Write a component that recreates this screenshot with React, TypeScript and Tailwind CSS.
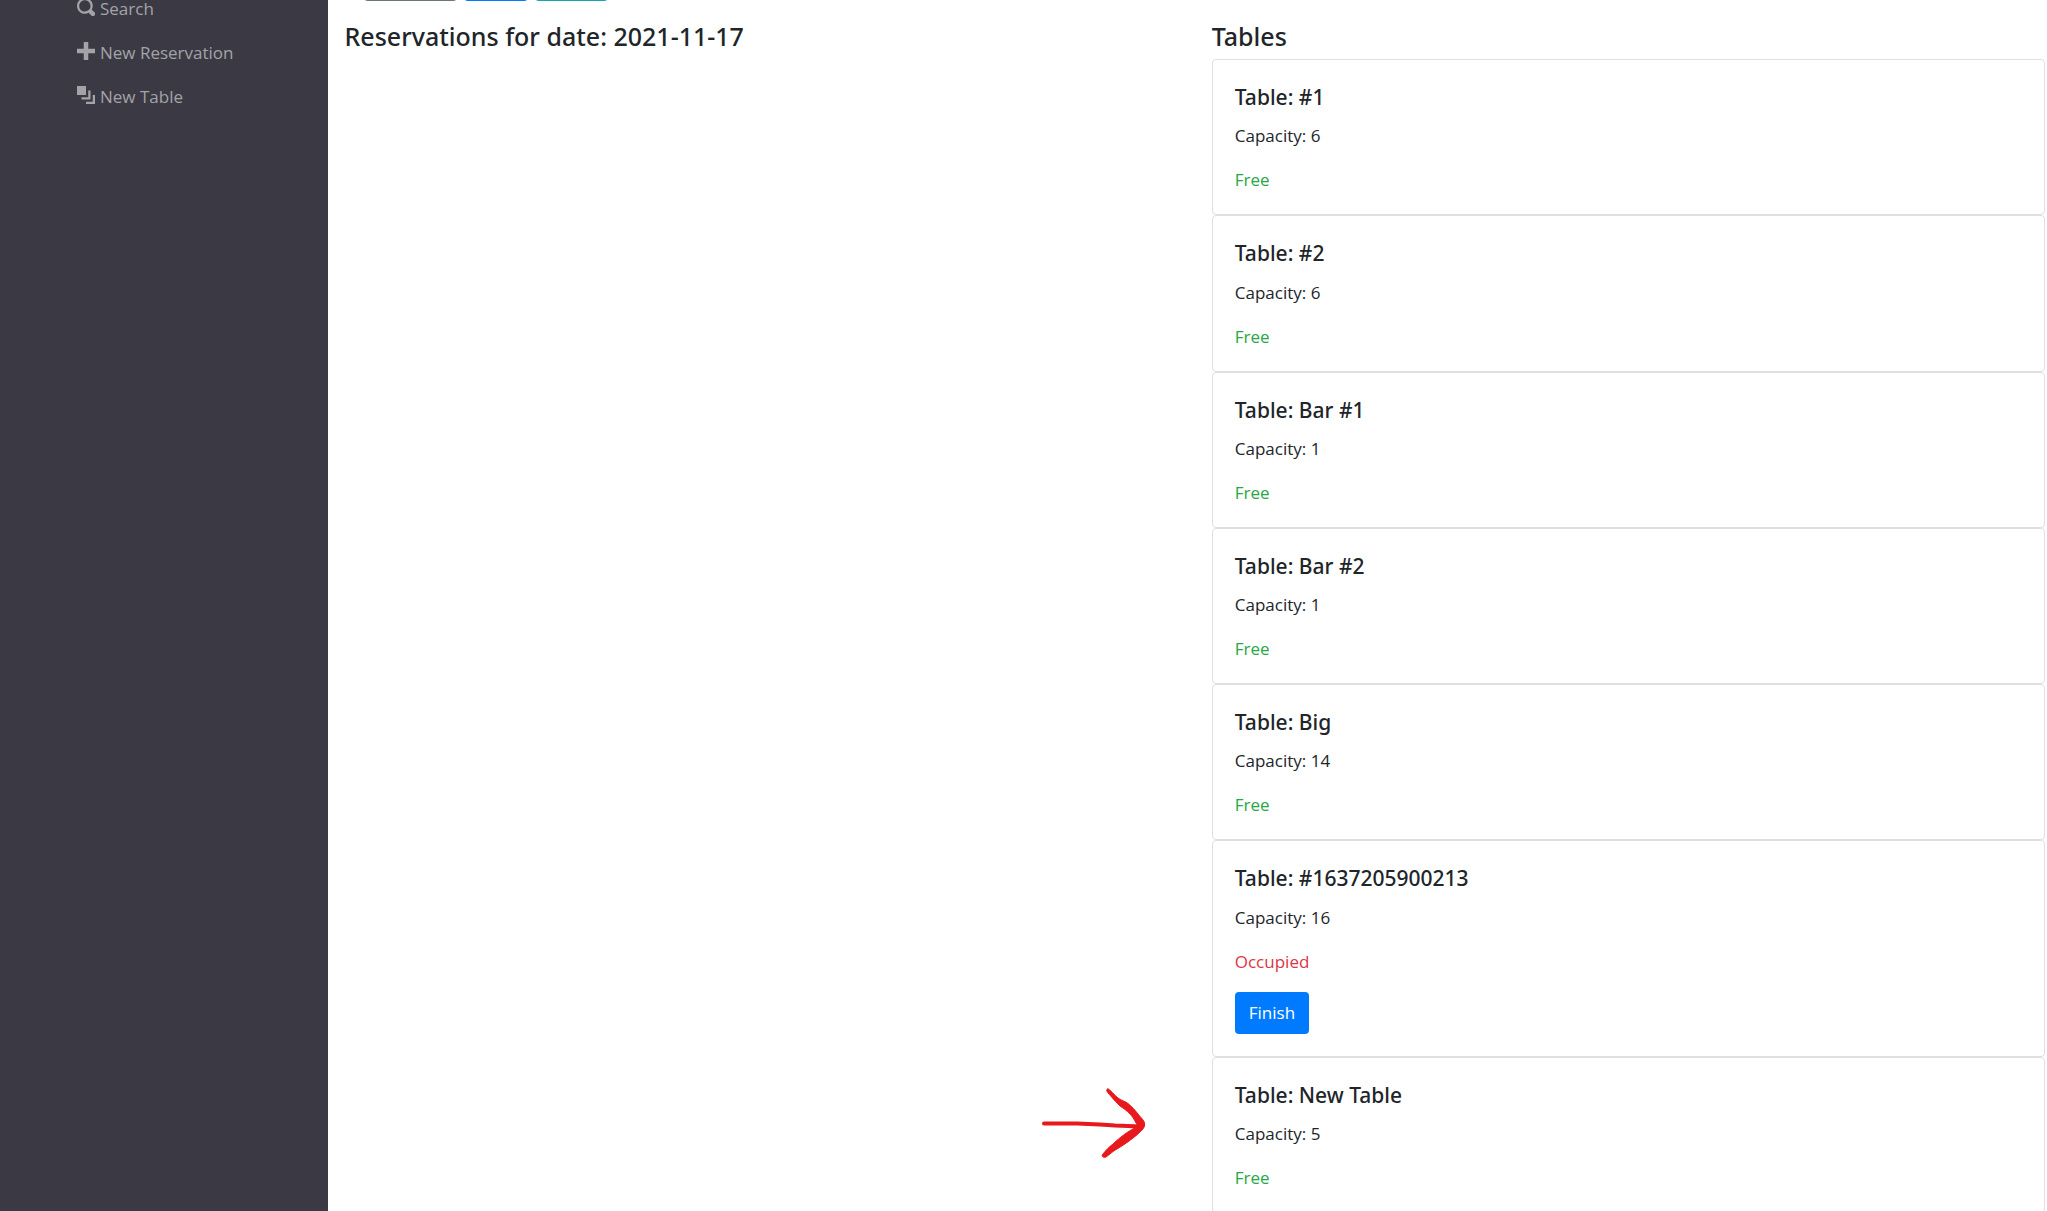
import React from "react";

type Table = { name: string; capacity: number; occupied?: boolean; marked?: boolean };

const tables: Table[] = [
  { name: "#1", capacity: 6 },
  { name: "#2", capacity: 6 },
  { name: "Bar #1", capacity: 1 },
  { name: "Bar #2", capacity: 1 },
  { name: "Big", capacity: 14 },
  { name: "#1637205900213", capacity: 16, occupied: true },
  { name: "New Table", capacity: 5, marked: true },
];

const links = [
  {
    label: "Search",
    path: "M3.5 0c-1.93 0-3.5 1.57-3.5 3.5s1.57 3.5 3.5 3.5c.59 0 1.17-.14 1.66-.41a1 1 0 0 0 .13.13l1 1a1.02 1.02 0 1 0 1.44-1.44l-1-1a1 1 0 0 0-.16-.13c.27-.49.44-1.06.44-1.66 0-1.93-1.55-3.5-3.5-3.5zm0 1c1.39 0 2.5 1.11 2.5 2.5 0 .66-.24 1.27-.66 1.72-.01.01-.02.02-.03.03a1 1 0 0 0-.13.13c-.44.4-1.04.63-1.69.63-1.39 0-2.5-1.11-2.5-2.5s1.11-2.5 2.5-2.5z",
  },
  { label: "New Reservation", path: "M3 0v3h-3v2h3v3h2v-3h3v-2h-3v-3h-2z" },
  {
    label: "New Table",
    path: "M0 0v4h4v-4h-4zm5 2v3h-3v1h4v-4h-1zm2 2v3h-3v1h4v-4h-1z",
  },
];

function Sidebar() {
  return (
    <nav className="w-[16%] shrink-0 bg-[#3b3a44]">
      <ul className="-mt-[13px] pl-[77px]">
        {links.map((link) => (
          <li key={link.label}>
            <a href="#" className="flex h-11 items-center gap-[5px] whitespace-nowrap text-[#a3a3a8]">
              <svg viewBox="0 0 8 8" className="mb-1 size-[18px] shrink-0" fill="currentColor" aria-hidden="true">
                <path d={link.path} />
              </svg>
              {link.label}
            </a>
          </li>
        ))}
      </ul>
    </nav>
  );
}

function Arrow() {
  return (
    <svg
      viewBox="0 0 110 80"
      className="absolute right-full top-6 mr-[63px] h-20 w-[110px]"
      fill="#e8191c"
      stroke="#e8191c"
      strokeLinecap="round"
      strokeLinejoin="round"
      aria-hidden="true"
    >
      <path d="M4 41.500H37L60 42.500L75 43.500L101 44.500" fill="none" strokeWidth="4" />
      <path
        d="M68 7C71 8 74 13 78 16C82 19 85 19 88 21.500C92 25 95 28 98 32C101 36 104 38 104.500 41C105 44 104 46 102 48C99 51 97 53 93 56C88 60 82 64 77 67C73 69 69 73 66 75C63 76 61 74 63 72C66 68 69 65 73 62C77 58 81 55 85 52C89 49 93 47 96 45C97 43 97 42 96 41C94 37 92 34 90 32C86 28 83 26 80 24C77 21 74 18 72 15.500C70 13 68 11 67 9.500C66 8 67 7 68 7Z"
        strokeWidth="1"
      />
    </svg>
  );
}

function TableCard({ table }: { table: Table }) {
  return (
    <article className="relative rounded-[4px] border border-[#dfdfdf] px-[22px] pb-[21px] pt-6">
      <h5 className="mb-3 font-['Noto_Sans',sans-serif] text-[21px] font-medium leading-[1.3]">Table: {table.name}</h5>
      <p className="mb-[18px]">Capacity: {table.capacity}</p>
      {table.occupied ? (
        <>
          <p className="text-[#dc3545]">Occupied</p>
          <button type="button" className="mb-px mt-[17px] block h-[42px] rounded-[4px] bg-[#007bff] px-[14px] text-white">
            Finish
          </button>
        </>
      ) : (
        <p className="text-[#28a745]">Free</p>
      )}
      {table.marked && <Arrow />}
    </article>
  );
}

export default function App() {
  return (
    <div className="flex h-screen overflow-hidden bg-white font-['Open_Sans',sans-serif] text-[17px] leading-[26px] text-[#212529]">
      <Sidebar />
      <main className="min-w-0 flex-1 pl-[17px] pr-0.5">
        <div className="flex h-px items-end gap-[7px] overflow-hidden pl-[19px]">
          <button type="button" aria-label="Previous" className="h-10 w-[93px] shrink-0 rounded-[4px] bg-[#6c757d]" />
          <button type="button" aria-label="Today" className="h-10 w-16 shrink-0 rounded-[4px] bg-[#007bff]" />
          <button type="button" aria-label="Next" className="h-10 w-[73px] shrink-0 rounded-[4px] bg-[#17a2b8]" />
        </div>
        <div className="grid grid-cols-2 gap-[34px] pt-[19px]">
          <section>
            <h4 className="font-['Noto_Sans',sans-serif] text-[25px] font-medium leading-8">
              Reservations for date: 2021-11-17
            </h4>
          </section>
          <section>
            <h4 className="mb-[7px] font-['Noto_Sans',sans-serif] text-[25px] font-medium leading-8">Tables</h4>
            {tables.map((table) => (
              <TableCard key={table.name} table={table} />
            ))}
          </section>
        </div>
      </main>
    </div>
  );
}
